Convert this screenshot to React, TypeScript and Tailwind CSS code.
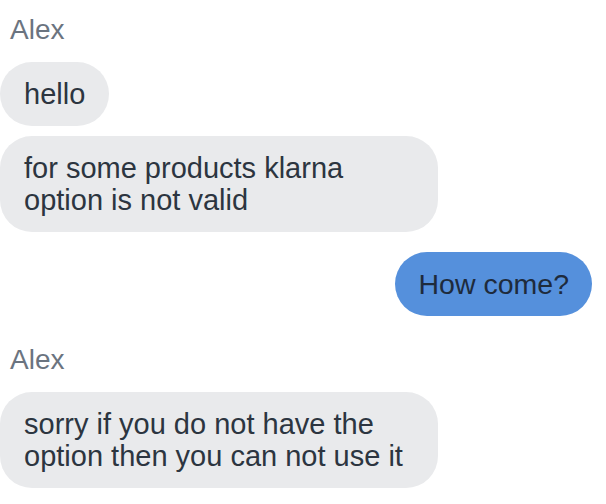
import React from "react";

const font = { fontFamily: '"Liberation Sans", Arial, sans-serif' };

function Incoming({ children }: { children: React.ReactNode }) {
  return (
    <div className="w-fit max-w-[438px] rounded-[32px] bg-[#e9eaec] px-6 py-4 text-[29px] leading-8 text-[#2c3540]">
      {children}
    </div>
  );
}

export default function App() {
  return (
    <div className="w-[606px] h-[504px] overflow-hidden bg-white pt-[14px] pr-[14px]" style={font}>
      <div className="flex flex-col">
        <div className="pl-[10px] text-[28px] leading-8 text-[#6b7480]">Alex</div>
        <div className="mt-4 flex flex-col gap-[10px]">
          <Incoming>hello</Incoming>
          <Incoming>for some products klarna option is not valid</Incoming>
        </div>
        <div className="mt-5 flex justify-end">
          <div className="w-fit rounded-[32px] bg-[#5590dc] pl-6 pr-[23px] py-4 text-[28.5px] leading-8 text-[#1e2b3c]">
            How come?
          </div>
        </div>
        <div className="mt-7 pl-[10px] text-[28px] leading-8 text-[#6b7480]">Alex</div>
        <div className="mt-4 flex flex-col gap-[10px]">
          <Incoming>sorry if you do not have the option then you can not use it</Incoming>
        </div>
      </div>
    </div>
  );
}
